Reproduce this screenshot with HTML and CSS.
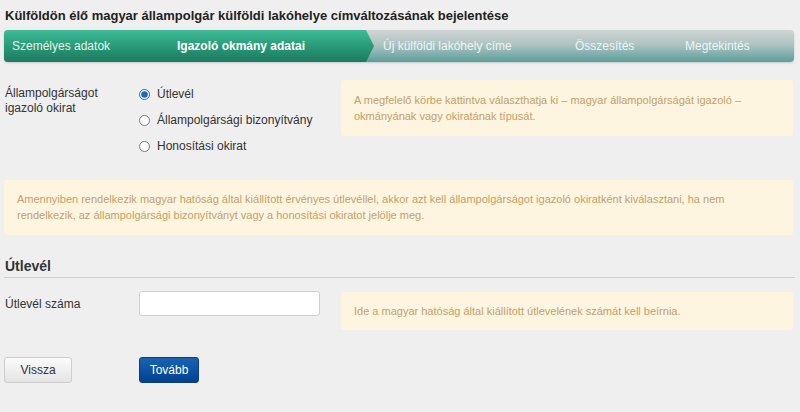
FILE: index.html
```html
<!DOCTYPE html>
<html lang="hu">
<head>
  <meta charset="UTF-8">
  <meta name="viewport" content="width=device-width, initial-scale=1.0">
  <title>Címváltozás bejelentése</title>
  <link rel="stylesheet" href="styles.css">
</head>
<body>
  <div class="page">
    <h1>Külföldön élő magyar állampolgár külföldi lakóhelye címváltozásának bejelentése</h1>

    <!-- Lépések -->
    <div class="steps">
      <div class="steps-done">
        <span class="step step-1">Személyes adatok</span>
        <span class="step step-2 active">Igazoló okmány adatai</span>
      </div>
      <span class="step step-3">Új külföldi lakóhely címe</span>
      <span class="step step-4">Összesítés</span>
      <span class="step step-5">Megtekintés</span>
    </div>

    <div class="row row-doc">
      <div class="label">Állampolgárságot<br>igazoló okirat</div>
      <div class="radios">
        <label class="radio"><input type="radio" name="okirat" checked> Útlevél</label>
        <label class="radio"><input type="radio" name="okirat"> Állampolgársági bizonyítvány</label>
        <label class="radio"><input type="radio" name="okirat"> Honosítási okirat</label>
      </div>
      <div class="hint">A megfelelő körbe kattintva választhatja ki – magyar állampolgárságát igazoló – okmányának vagy okiratának típusát.</div>
    </div>

    <div class="note">Amennyiben rendelkezik magyar hatóság által kiállított érvényes útlevéllel, akkor azt kell állampolgárságot igazoló okiratként kiválasztani, ha nem rendelkezik, az állampolgársági bizonyítványt vagy a honosítási okiratot jelölje meg.</div>

    <h2>Útlevél</h2>

    <div class="row row-passport">
      <div class="label">Útlevél száma</div>
      <div class="field"><input type="text" class="text-input"></div>
      <div class="hint hint-single">Ide a magyar hatóság által kiállított útlevelének számát kell beírnia.</div>
    </div>

    <div class="buttons">
      <button class="btn btn-back">Vissza</button>
      <button class="btn btn-next">Tovább</button>
    </div>
  </div>
</body>
</html>
```

FILE: styles.css
```css
* {
  margin: 0;
  padding: 0;
  box-sizing: border-box;
  font-family: Arial, "Liberation Sans", sans-serif;
}

body {
  background-color: #efefef;
  color: #333;
}

.page {
  width: 794px;
  padding: 8px 0 0 4px;
}

h1 {
  font-size: 13px;
  font-weight: bold;
  color: #222;
  padding-left: 1px;
  line-height: 15px;
}

/* Lépések */
.steps {
  display: flex;
  align-items: center;
  height: 32px;
  margin-top: 7px;
  border-radius: 4px;
  background: linear-gradient(#d0d4d4, #aec4c3 45%, #5b9e9b);
  box-shadow: 0 1px 2px rgba(0, 0, 0, 0.15);
  color: #fff;
  font-size: 12px;
}

.steps-done {
  display: flex;
  align-items: center;
  width: 370px;
  height: 32px;
  border-radius: 4px 0 0 4px;
  background: linear-gradient(#3fbc97, #2a9a78 50%, #1c7a60);
  clip-path: polygon(0 0, 362px 0, 100% 50%, 362px 100%, 0 100%);
}

.step {
  display: block;
  white-space: nowrap;
}

.step-1 {
  width: 173px;
  padding-left: 8px;
  color: #e4f4ee;
}

.step-2 {
  font-weight: bold;
}

.step-3 {
  width: 192px;
  margin-left: 9px;
  color: #eef4f4;
}

.step-4 {
  width: 110px;
  color: #eef4f4;
}

.step-5 {
  color: #eef4f4;
}

/* Sorok */
.row {
  display: grid;
  grid-template-columns: 135px 202px 452px;
}

.row-doc {
  margin-top: 18px;
}

.label {
  padding-left: 1px;
  font-size: 12px;
  line-height: 15px;
  color: #333;
}

.row-doc .label {
  padding-top: 6px;
}

.radios {
  display: flex;
  flex-direction: column;
  gap: 11px;
  padding-top: 7px;
}

.radio {
  display: flex;
  align-items: center;
  font-size: 12px;
  line-height: 15px;
  color: #333;
}

.radio input {
  width: 11px;
  height: 11px;
  margin: 0 7px 0 0;
  accent-color: #1e6bb8;
}

.hint {
  background-color: #fdf5df;
  border-radius: 3px;
  color: #c4a06a;
  font-size: 11px;
  line-height: 16px;
  padding: 12px 30px 12px 13px;
  align-self: start;
}

.note {
  margin-top: 26px;
  width: 789px;
  background-color: #fdf5df;
  border-radius: 3px;
  color: #c4a06a;
  font-size: 11px;
  line-height: 16px;
  padding: 11px 13px 12px 13px;
}

h2 {
  margin-top: 23px;
  padding: 0 0 3px 1px;
  font-size: 14px;
  font-weight: bold;
  color: #333;
  border-bottom: 1px solid #cfcfcf;
  width: 791px;
}

.row-passport {
  margin-top: 13px;
}

.row-passport .label {
  padding-top: 6px;
}

.text-input {
  width: 181px;
  height: 25px;
  border: 1px solid #cfcfcf;
  border-radius: 3px;
  background-color: #fff;
}

.hint-single {
  margin-top: 1px;
  padding: 11px 13px;
}

/* Gombok */
.buttons {
  display: flex;
  gap: 67px;
  margin-top: 27px;
}

.btn {
  height: 26px;
  font-size: 12px;
  border-radius: 3px;
  cursor: pointer;
}

.btn-back {
  width: 68px;
  border: 1px solid #cdcdcd;
  background: linear-gradient(#fbfbfb, #e4e4e4);
  color: #333;
}

.btn-next {
  width: 60px;
  border: 1px solid #0a3d7a;
  background: linear-gradient(#1b62b3, #00418f);
  color: #fff;
}
```
